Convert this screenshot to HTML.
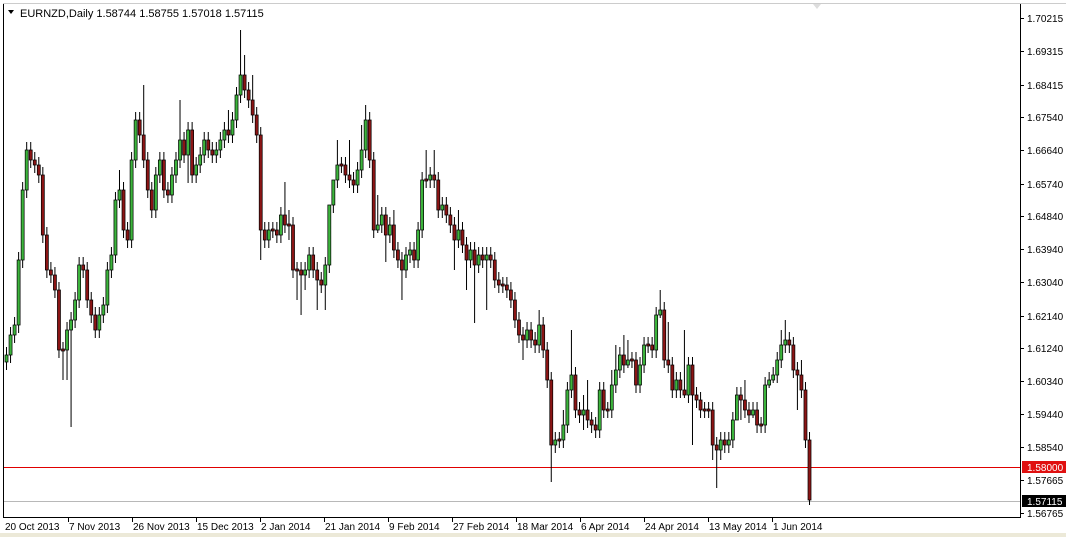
<!DOCTYPE html>
<html><head><meta charset="utf-8"><style>
html,body{margin:0;padding:0;background:#fff;}
body{width:1066px;height:537px;overflow:hidden;position:relative;}
svg{position:absolute;left:0;top:0;}
</style></head><body>
<svg width="1066" height="537" xmlns="http://www.w3.org/2000/svg" font-family="'Liberation Sans',sans-serif" font-size="10">
<rect x="0" y="0" width="1066" height="537" fill="#fff"/>
<rect x="0" y="533" width="1066" height="4" fill="#ece9d8"/>
<rect x="3" y="3" width="1" height="514" fill="#000"/>
<rect x="1020" y="3" width="1" height="514" fill="#000"/>
<rect x="3" y="517" width="1018" height="1" fill="#000"/>
<rect x="3" y="3" width="1063" height="1" fill="#ccc"/>
<rect x="4" y="501" width="1016" height="1" fill="#b8b8b8"/>
<rect x="4" y="467" width="1016" height="1" fill="#e00000"/>
<g transform="translate(-0.05 0) scale(1.0088 1)">
<path fill="none" stroke="#000" stroke-width="1" d="M6.5 347V370M10.5 327V363M14.5 317V343M18.5 252V333M22.5 182V268M26.5 142V198M30.5 142V168M34.5 152V173M38.5 157V183M42.5 167V243M46.5 227V278M50.5 262V283M54.5 267V298M58.5 282V358M62.5 342V380M66.5 322V380M70.5 312V427M74.5 292V328M78.5 257V308M82.5 257V278M86.5 262V308M90.5 292V323M94.5 307V338M98.5 307V338M102.5 297V323M106.5 262V313M110.5 247V278M114.5 192V263M118.5 170V208M122.5 182V238M126.5 222V248M130.5 152V248M134.5 112V168M138.5 112V143M142.5 85V168M146.5 152V198M150.5 182V218M154.5 167V218M158.5 152V183M162.5 152V198M166.5 182V203M170.5 167V203M174.5 152V183M178.5 100V168M182.5 132V163M186.5 122V183M190.5 122V183M194.5 157V183M198.5 147V173M202.5 132V163M206.5 132V158M210.5 142V163M214.5 142V163M218.5 132V158M222.5 122V148M226.5 110V143M230.5 112V143M234.5 87V128M238.5 30V103M242.5 55V98M246.5 82V108M250.5 75V123M254.5 107V143M258.5 127V260M262.5 222V248M266.5 222V248M270.5 222V238M274.5 222V243M278.5 207V243M282.5 182V233M286.5 210V240M290.5 217V278M294.5 262V300M298.5 262V315M302.5 262V290M306.5 247V278M310.5 247V278M314.5 262V310M318.5 272V293M322.5 257V310M326.5 257V273M330.5 197V213M334.5 140V188M338.5 157V173M342.5 157V183M346.5 140V188M350.5 172V193M354.5 162V193M358.5 125V178M362.5 105V158M366.5 112V168M370.5 152V238M374.5 195V233M378.5 207V233M382.5 207V262M386.5 217V243M390.5 210V258M394.5 242V268M398.5 252V300M402.5 247V278M406.5 242V263M410.5 242V268M414.5 222V268M418.5 172V238M422.5 150V188M426.5 167V188M430.5 150V188M434.5 172V218M438.5 197V218M442.5 197V223M446.5 207V233M450.5 217V270M454.5 210V248M458.5 222V253M462.5 237V290M466.5 242V268M470.5 242V323M474.5 247V273M478.5 247V268M482.5 247V310M486.5 247V268M490.5 252V288M494.5 272V293M498.5 277V293M502.5 277V298M506.5 282V308M510.5 292V328M514.5 312V343M518.5 327V360M522.5 322V348M526.5 322V348M530.5 332V353M534.5 310V353M538.5 317V358M542.5 342V388M546.5 372V482M550.5 432V453M554.5 432V448M558.5 410V448M562.5 382V433M566.5 330V398M570.5 367V418M574.5 402V423M578.5 395V430M582.5 380V428M586.5 412V433M590.5 417V438M594.5 382V438M598.5 382V418M602.5 402V418M606.5 370V418M610.5 345V393M614.5 347V378M618.5 335V373M622.5 340V368M626.5 352V368M630.5 352V393M634.5 357V393M638.5 337V373M642.5 337V353M646.5 337V358M650.5 307V358M654.5 290V318M658.5 302V368M662.5 322V373M666.5 357V398M670.5 372V398M674.5 372V398M678.5 330V398M682.5 357V403M686.5 357V445M690.5 387V408M694.5 392V418M698.5 402V418M702.5 402V418M706.5 402V460M710.5 437V488M714.5 432V460M718.5 432V453M722.5 432V453M726.5 412V448M730.5 387V408M734.5 387V420M738.5 380V418M742.5 402V423M746.5 402V418M750.5 402V433M754.5 417V433M758.5 377V433M762.5 372V388M766.5 367V383M770.5 352V383M774.5 330V368M778.5 320V353M782.5 332V353M786.5 337V378M790.5 362V410M794.5 360V398M798.5 382V448M802.5 432V505"/>
<path fill="#3cb43c" stroke="#000" stroke-width="0.7" d="M5 355h3V362h-3zM9 335h3V355h-3zM13 325h3V335h-3zM17 260h3V325h-3zM21 190h3V260h-3zM25 150h3V190h-3zM65 330h3V350h-3zM69 320h3V330h-3zM73 300h3V320h-3zM77 265h3V300h-3zM97 315h3V330h-3zM101 305h3V315h-3zM105 270h3V305h-3zM109 255h3V270h-3zM113 200h3V255h-3zM117 190h3V200h-3zM129 160h3V240h-3zM133 120h3V160h-3zM153 175h3V210h-3zM157 160h3V175h-3zM169 175h3V195h-3zM173 160h3V175h-3zM177 140h3V160h-3zM185 130h3V155h-3zM193 165h3V175h-3zM197 155h3V165h-3zM201 140h3V155h-3zM213 150h3V155h-3zM217 140h3V150h-3zM221 130h3V140h-3zM229 120h3V135h-3zM233 95h3V120h-3zM237 75h3V95h-3zM265 230h3V240h-3zM277 215h3V235h-3zM301 270h3V275h-3zM305 255h3V270h-3zM321 265h3V285h-3zM325 205h3V265h-3zM329 180h3V205h-3zM333 165h3V180h-3zM353 170h3V185h-3zM357 150h3V170h-3zM361 120h3V150h-3zM373 225h3V230h-3zM377 215h3V225h-3zM385 225h3V235h-3zM401 255h3V270h-3zM405 250h3V255h-3zM413 230h3V260h-3zM417 180h3V230h-3zM425 175h3V180h-3zM437 205h3V210h-3zM453 230h3V240h-3zM465 250h3V260h-3zM473 255h3V265h-3zM481 255h3V260h-3zM521 330h3V340h-3zM533 325h3V345h-3zM549 440h3V445h-3zM557 425h3V440h-3zM561 390h3V425h-3zM565 375h3V390h-3zM577 410h3V415h-3zM593 390h3V430h-3zM605 385h3V410h-3zM609 370h3V385h-3zM613 355h3V370h-3zM621 360h3V365h-3zM633 365h3V385h-3zM637 345h3V365h-3zM649 315h3V350h-3zM653 310h3V315h-3zM669 380h3V390h-3zM681 365h3V395h-3zM713 440h3V450h-3zM721 440h3V445h-3zM725 420h3V440h-3zM729 395h3V420h-3zM745 410h3V415h-3zM757 385h3V425h-3zM761 380h3V385h-3zM765 375h3V380h-3zM769 360h3V375h-3zM773 345h3V360h-3zM777 340h3V345h-3z"/>
<path fill="#8b1515" stroke="#000" stroke-width="0.7" d="M29 150h3V160h-3zM33 160h3V165h-3zM37 165h3V175h-3zM41 175h3V235h-3zM45 235h3V270h-3zM49 270h3V275h-3zM53 275h3V290h-3zM57 290h3V350h-3zM61 349h3V351h-3zM81 265h3V270h-3zM85 270h3V300h-3zM89 300h3V315h-3zM93 315h3V330h-3zM121 190h3V230h-3zM125 230h3V240h-3zM137 120h3V135h-3zM141 135h3V160h-3zM145 160h3V190h-3zM149 190h3V210h-3zM161 160h3V190h-3zM165 190h3V195h-3zM181 140h3V155h-3zM189 130h3V175h-3zM205 140h3V150h-3zM209 150h3V155h-3zM225 130h3V135h-3zM241 75h3V90h-3zM245 90h3V100h-3zM249 100h3V115h-3zM253 115h3V135h-3zM257 135h3V230h-3zM261 230h3V240h-3zM269 229h3V231h-3zM273 230h3V235h-3zM281 215h3V225h-3zM285 224h3V226h-3zM289 225h3V270h-3zM293 269h3V271h-3zM297 270h3V275h-3zM309 255h3V270h-3zM313 270h3V280h-3zM317 280h3V285h-3zM337 164h3V166h-3zM341 165h3V175h-3zM345 175h3V180h-3zM349 180h3V185h-3zM365 120h3V160h-3zM369 160h3V230h-3zM381 215h3V235h-3zM389 225h3V250h-3zM393 250h3V260h-3zM397 260h3V270h-3zM409 250h3V260h-3zM421 179h3V181h-3zM429 175h3V180h-3zM433 180h3V210h-3zM441 205h3V215h-3zM445 215h3V225h-3zM449 225h3V240h-3zM457 230h3V245h-3zM461 245h3V260h-3zM469 250h3V265h-3zM477 255h3V260h-3zM485 255h3V260h-3zM489 260h3V280h-3zM493 280h3V285h-3zM497 284h3V286h-3zM501 285h3V290h-3zM505 290h3V300h-3zM509 300h3V320h-3zM513 320h3V335h-3zM517 335h3V340h-3zM525 330h3V340h-3zM529 340h3V345h-3zM537 325h3V350h-3zM541 350h3V380h-3zM545 380h3V445h-3zM553 439h3V441h-3zM569 375h3V410h-3zM573 410h3V415h-3zM581 410h3V420h-3zM585 420h3V425h-3zM589 425h3V430h-3zM597 390h3V410h-3zM601 409h3V411h-3zM617 355h3V365h-3zM625 359h3V361h-3zM629 360h3V385h-3zM641 344h3V346h-3zM645 345h3V350h-3zM657 310h3V360h-3zM661 360h3V365h-3zM665 365h3V390h-3zM673 380h3V390h-3zM677 390h3V395h-3zM685 365h3V395h-3zM689 395h3V400h-3zM693 400h3V410h-3zM697 409h3V411h-3zM701 409h3V411h-3zM705 410h3V445h-3zM709 445h3V450h-3zM717 440h3V445h-3zM733 395h3V400h-3zM737 400h3V410h-3zM741 410h3V415h-3zM749 410h3V425h-3zM753 424h3V426h-3zM781 340h3V345h-3zM785 345h3V370h-3zM789 370h3V375h-3zM793 375h3V390h-3zM797 390h3V440h-3zM801 440h3V500h-3z"/>
</g>
<path d="M8 10 L14 10 L11 14 Z" fill="#000"/>
<text x="20" y="17" font-size="11">EURNZD,Daily  1.58744 1.58755 1.57018 1.57115</text>
<path d="M813 4 L821 4 L817 9 Z" fill="#ddd"/>
<g fill="#000">
<rect x="1020" y="18" width="4" height="1"/><rect x="1020" y="51" width="4" height="1"/><rect x="1020" y="85" width="4" height="1"/><rect x="1020" y="117" width="4" height="1"/><rect x="1020" y="150" width="4" height="1"/><rect x="1020" y="184" width="4" height="1"/><rect x="1020" y="216" width="4" height="1"/><rect x="1020" y="249" width="4" height="1"/><rect x="1020" y="282" width="4" height="1"/><rect x="1020" y="316" width="4" height="1"/><rect x="1020" y="348" width="4" height="1"/><rect x="1020" y="381" width="4" height="1"/><rect x="1020" y="414" width="4" height="1"/><rect x="1020" y="447" width="4" height="1"/><rect x="1020" y="480" width="4" height="1"/><rect x="1020" y="513" width="4" height="1"/>
<rect x="68" y="517" width="1" height="5"/><rect x="132" y="517" width="1" height="5"/><rect x="196" y="517" width="1" height="5"/><rect x="260" y="517" width="1" height="5"/><rect x="324" y="517" width="1" height="5"/><rect x="388" y="517" width="1" height="5"/><rect x="452" y="517" width="1" height="5"/><rect x="516" y="517" width="1" height="5"/><rect x="580" y="517" width="1" height="5"/><rect x="644" y="517" width="1" height="5"/><rect x="708" y="517" width="1" height="5"/><rect x="772" y="517" width="1" height="5"/>
<text x="1027" y="22">1.70215</text><text x="1027" y="55">1.69315</text><text x="1027" y="89">1.68415</text><text x="1027" y="121">1.67540</text><text x="1027" y="154">1.66640</text><text x="1027" y="188">1.65740</text><text x="1027" y="220">1.64840</text><text x="1027" y="253">1.63940</text><text x="1027" y="286">1.63040</text><text x="1027" y="320">1.62140</text><text x="1027" y="352">1.61240</text><text x="1027" y="385">1.60340</text><text x="1027" y="418">1.59440</text><text x="1027" y="451">1.58540</text><text x="1027" y="484">1.57665</text><text x="1027" y="517">1.56765</text>
<text x="5" y="530">20 Oct 2013</text><text x="69" y="530">7 Nov 2013</text><text x="133" y="530">26 Nov 2013</text><text x="197" y="530">15 Dec 2013</text><text x="261" y="530">2 Jan 2014</text><text x="325" y="530">21 Jan 2014</text><text x="389" y="530">9 Feb 2014</text><text x="453" y="530">27 Feb 2014</text><text x="517" y="530">18 Mar 2014</text><text x="581" y="530">6 Apr 2014</text><text x="645" y="530">24 Apr 2014</text><text x="709" y="530">13 May 2014</text><text x="773" y="530">1 Jun 2014</text>
</g>
<rect x="1022" y="461" width="44" height="12" fill="#e01010"/><text x="1027" y="471" fill="#fff">1.58000</text>
<rect x="1022" y="495" width="44" height="12" fill="#000"/><text x="1027" y="505" fill="#fff">1.57115</text>
</svg>
</body></html>
